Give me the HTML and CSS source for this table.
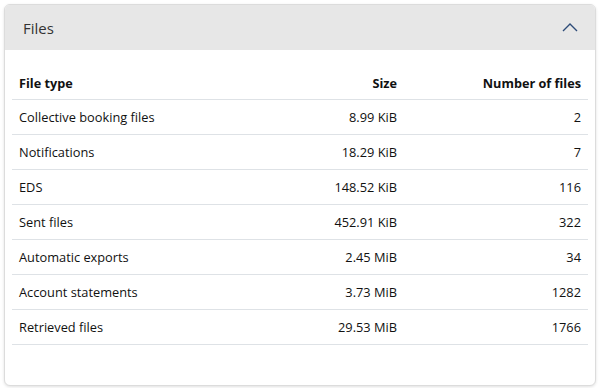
FILE: index.html
```html
<!DOCTYPE html>
<html>
<head>
<meta charset="utf-8">
<link rel="stylesheet" href="styles.css">
</head>
<body>
<section class="card">
  <header class="card-header">
    <h2 class="title">Files</h2>
    <svg class="chevron" width="16" height="10" viewBox="0 0 16 10"><path d="M1 9 L8 2 L15 9" fill="none" stroke="#2d4b78" stroke-width="1.4"/></svg>
  </header>
  <div class="card-body">
    <table class="files">
      <thead>
        <tr><th class="left">File type</th><th class="num">Size</th><th class="num">Number of files</th></tr>
      </thead>
      <tbody>
        <tr><td>Collective booking files</td><td class="num">8.99 KiB</td><td class="num">2</td></tr>
        <tr><td>Notifications</td><td class="num">18.29 KiB</td><td class="num">7</td></tr>
        <tr><td>EDS</td><td class="num">148.52 KiB</td><td class="num">116</td></tr>
        <tr><td>Sent files</td><td class="num">452.91 KiB</td><td class="num">322</td></tr>
        <tr><td>Automatic exports</td><td class="num">2.45 MiB</td><td class="num">34</td></tr>
        <tr><td>Account statements</td><td class="num">3.73 MiB</td><td class="num">1282</td></tr>
        <tr><td>Retrieved files</td><td class="num">29.53 MiB</td><td class="num">1766</td></tr>
      </tbody>
    </table>
  </div>
</section>
</body>
</html>
```
FILE: styles.css
```css
html, body { margin: 0; padding: 0; background: #fff; }
body {
  padding: 4px 5px 3px 4px;
  font-family: "Open Sans", "Noto Sans", sans-serif;
  color: #111;
}
.card {
  border: 1px solid #dcdcdc;
  border-radius: 6px;
  box-shadow: 0 1px 3px rgba(0,0,0,0.12);
  height: 380px;
  overflow: hidden;
  background: #fff;
}
.card-header {
  display: flex;
  align-items: center;
  justify-content: space-between;
  height: 45px;
  background: #e7e7e7;
  padding: 0 17px 0 18px;
}
.title {
  margin: 0;
  font-weight: 400;
  font-size: 15px;
  color: #333;
}
.chevron { display: block; margin-top: -2px; }
.card-body { padding: 16px 7px 0 7px; }
.files {
  width: 100%;
  border-collapse: collapse;
  font-size: 12.8px;
}
.files th {
  font-weight: 700;
  font-size: 12.7px;
  height: 33px;
  padding: 0 7px;
  border-bottom: 1px solid #dee2e6;
  vertical-align: middle;
}
.files td {
  height: 34px;
  padding: 0 7px;
  border-bottom: 1px solid #dee2e6;
  vertical-align: middle;
}
.left { text-align: left; }
.num { text-align: right; }
.files th:nth-child(2), .files td:nth-child(2) { width: 170px; }
.files th:nth-child(3), .files td:nth-child(3) { width: 170px; }
```
